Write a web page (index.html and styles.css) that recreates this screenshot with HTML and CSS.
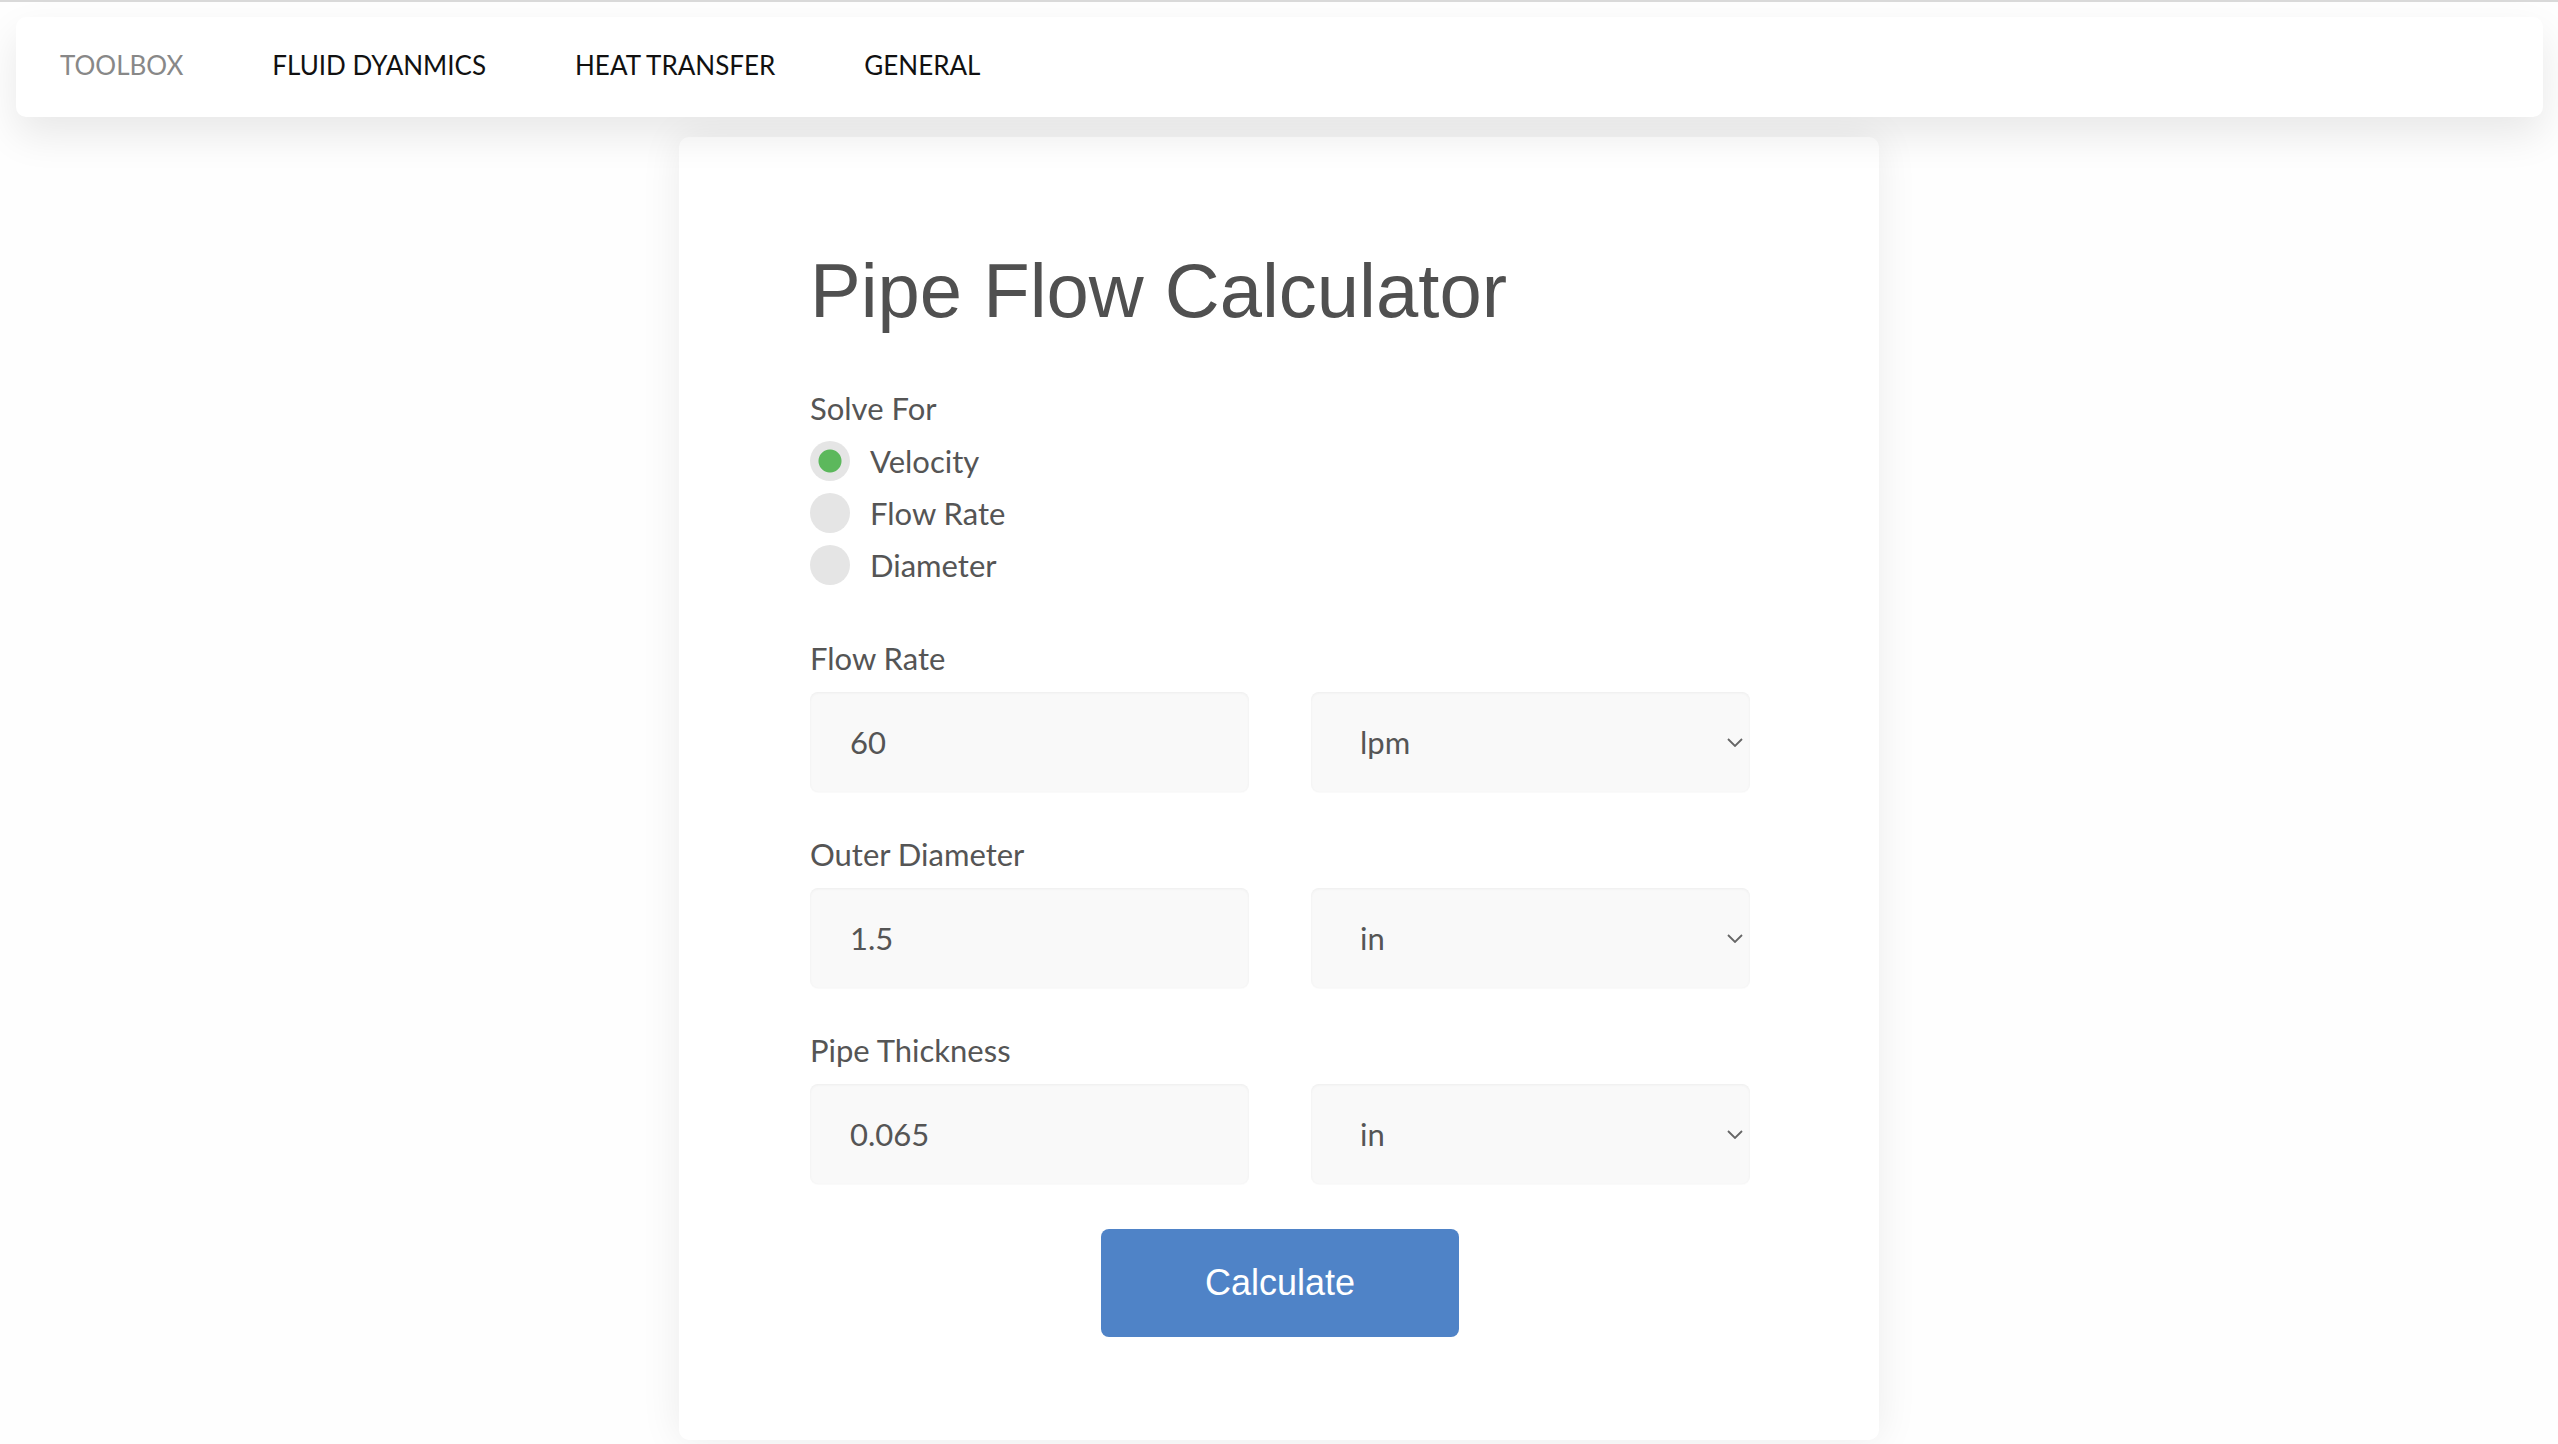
FILE: index.html
```html
<!DOCTYPE html>
<html lang="en">
<head>
<meta charset="utf-8">
<title>Pipe Flow Calculator</title>
<link rel="stylesheet" href="styles.css">
</head>
<body>
<nav class="topnav">
  <a class="nav-item nav-brand" href="#">TOOLBOX</a>
  <a class="nav-item" href="#">FLUID DYANMICS</a>
  <a class="nav-item" href="#">HEAT TRANSFER</a>
  <a class="nav-item" href="#">GENERAL</a>
</nav>
<main class="card">
  <h1 class="title">Pipe Flow Calculator</h1>
  <form class="calc">
    <div class="field-label solve-label">Solve For</div>
    <div class="radios">
      <label class="radio-row"><input type="radio" name="solve" class="radio" checked><span>Velocity</span></label>
      <label class="radio-row"><input type="radio" name="solve" class="radio"><span>Flow Rate</span></label>
      <label class="radio-row"><input type="radio" name="solve" class="radio"><span>Diameter</span></label>
    </div>

    <div class="group">
      <div class="field-label">Flow Rate</div>
      <div class="pair">
        <input class="box" type="text" value="60">
        <div class="select-wrap">
          <select class="box select"><option>lpm</option></select>
          <svg class="chev" width="16" height="9" viewBox="0 0 16 9"><path d="M1 1 L8 8 L15 1" fill="none" stroke="#666" stroke-width="1.8"/></svg>
        </div>
      </div>
    </div>

    <div class="group">
      <div class="field-label">Outer Diameter</div>
      <div class="pair">
        <input class="box" type="text" value="1.5">
        <div class="select-wrap">
          <select class="box select"><option>in</option></select>
          <svg class="chev" width="16" height="9" viewBox="0 0 16 9"><path d="M1 1 L8 8 L15 1" fill="none" stroke="#666" stroke-width="1.8"/></svg>
        </div>
      </div>
    </div>

    <div class="group">
      <div class="field-label">Pipe Thickness</div>
      <div class="pair">
        <input class="box" type="text" value="0.065">
        <div class="select-wrap">
          <select class="box select"><option>in</option></select>
          <svg class="chev" width="16" height="9" viewBox="0 0 16 9"><path d="M1 1 L8 8 L15 1" fill="none" stroke="#666" stroke-width="1.8"/></svg>
        </div>
      </div>
    </div>

    <button type="button" class="calc-btn">Calculate</button>
  </form>
</main>
</body>
</html>
```

FILE: styles.css
```css
html, body {
  margin: 0;
  padding: 0;
}
body {
  background: #fefefe;
  border-top: 2px solid #d9d9d9;
  font-family: "Lato", "Open Sans", sans-serif;
  color: #555;
  overflow: hidden;
  height: 1442px;
}
.topnav {
  margin: 15px 15px 0 16px;
  height: 100px;
  box-sizing: border-box;
  padding-bottom: 5px;
  background: #fff;
  border-radius: 10px;
  box-shadow: 0 18px 40px rgba(0, 0, 0, 0.09);
  display: flex;
  align-items: center;
  position: relative;
  z-index: 2;
}
.nav-item {
  padding: 0 45px 0 44px;
  font-size: 26px;
  color: #111;
  text-decoration: none;
}
.nav-brand {
  color: #888;
}
.card {
  width: 1200px;
  box-sizing: border-box;
  margin: 20px auto 0;
  background: #fff;
  border-radius: 10px;
  box-shadow: 0 0 40px rgba(0, 0, 0, 0.08);
  padding: 110px 129px 103px 131px;
  position: relative;
  z-index: 1;
}
.title {
  margin: 0;
  font-family: "Liberation Sans", Arial, sans-serif;
  font-weight: 400;
  font-size: 76px;
  line-height: 88px;
  color: #505050;
}
.calc {
  margin: 53px 0 0;
}
.field-label {
  font-size: 31px;
  line-height: 40px;
  color: #555;
  margin-bottom: 14px;
}
.solve-label {
  margin-bottom: 7px;
}
.radios {
  display: flex;
  flex-direction: column;
  margin-bottom: 47px;
}
.radio-row {
  display: flex;
  align-items: center;
  height: 52px;
  gap: 20px;
  font-size: 31px;
  color: #555;
}
.radio {
  appearance: none;
  -webkit-appearance: none;
  margin: 0;
  width: 40px;
  height: 40px;
  border-radius: 50%;
  background: #e5e5e5;
  flex: none;
}
.radio:checked {
  background: radial-gradient(circle, #5cb85c 0 11px, #e5e5e5 12px);
}
.group {
  margin-bottom: 42px;
}
.pair {
  display: grid;
  grid-template-columns: 1fr 1fr;
  gap: 62px;
}
.box {
  appearance: none;
  -webkit-appearance: none;
  box-sizing: border-box;
  width: 100%;
  height: 100px;
  margin: 0;
  border: none;
  border-radius: 8px;
  background: #f9f9f9;
  box-shadow: inset 0 1px 3px rgba(0, 0, 0, 0.05), 0 1px 0 rgba(0, 0, 0, 0.02);
  font-family: "Lato", "Open Sans", sans-serif;
  font-size: 31px;
  color: #555;
  padding: 0 40px;
  outline: none;
}
.select-wrap {
  position: relative;
}
.select {
  padding: 0 40px 0 49px;
}
.chev {
  position: absolute;
  right: 7px;
  top: 46px;
}
.calc-btn {
  display: block;
  margin: 45px auto 0;
  width: 358px;
  height: 108px;
  border: none;
  border-radius: 8px;
  background: #4f83c7;
  color: #fff;
  font-family: "Liberation Sans", Arial, sans-serif;
  font-size: 36px;
}
```
